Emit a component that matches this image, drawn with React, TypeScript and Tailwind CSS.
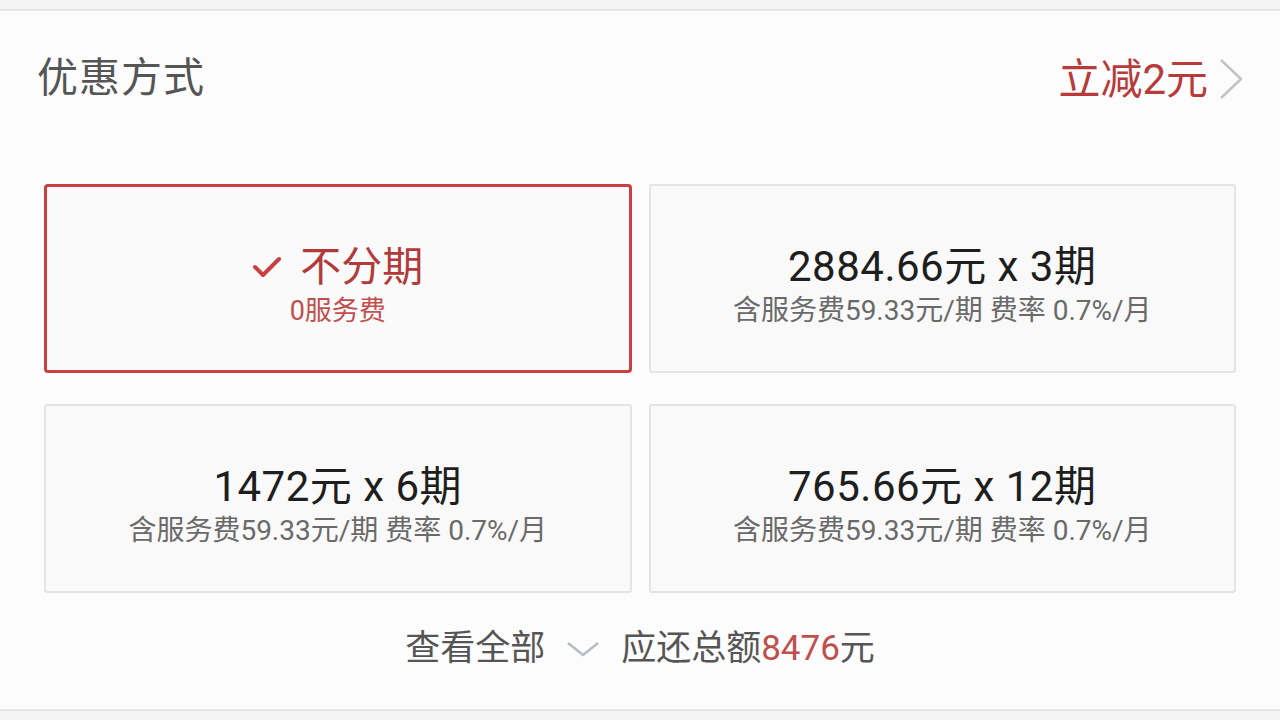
import React from 'react';

const plans = [
  { main: '2884.66元 x 3期', sub: '含服务费59.33元/期 费率 0.7%/月' },
  { main: '1472元 x 6期', sub: '含服务费59.33元/期 费率 0.7%/月' },
  { main: '765.66元 x 12期', sub: '含服务费59.33元/期 费率 0.7%/月' },
];

const Card: React.FC<{ main: string; sub: string }> = ({ main, sub }) => (
  <div className="h-[189px] rounded-[3px] border-2 border-[#e4e4e4] bg-[#f9f9f9] flex flex-col items-center justify-center pt-[14px]">
    <div className="text-[42px] leading-[46px] text-[#1e1e1e] tracking-[0.5px]">{main}</div>
    <div className="text-[28px] leading-[32px] text-[#6a6a6a] mt-[5px]">{sub}</div>
  </div>
);

export default function App() {
  return (
    <div
      className="w-[1280px] h-[720px] bg-[#f4f4f4] pt-[9px] overflow-hidden"
      style={{ fontFamily: 'Roboto, "Noto Sans CJK SC", sans-serif' }}
    >
      <div className="h-[702px] bg-[#fcfcfc] border-t-2 border-b-2 border-[#e6e6e6] flex flex-col">
        <div className="flex items-center justify-between pl-[37px] pr-[36px] h-[140px] pb-[4px]">
          <div className="text-[41px] text-[#555] tracking-[1px]">优惠方式</div>
          <div className="flex items-center gap-[10px]">
            <span className="text-[42px] text-[#b83b3b]">立减2元</span>
            <svg width="26" height="44" viewBox="0 0 26 44" fill="none">
              <path d="M3 3 L23 22 L3 41" stroke="#c4c4c4" strokeWidth="2.5" strokeLinejoin="round" />
            </svg>
          </div>
        </div>
        <div className="grid grid-cols-2 gap-x-[17px] gap-y-[31px] px-[44px] pt-[33px]">
          <div className="h-[189px] rounded-[4px] border-[3px] border-[#c8403f] bg-[#fbfafa] flex flex-col items-center justify-center pt-[14px]">
            <div className="flex items-center gap-[18px]">
              <svg width="30" height="22" viewBox="0 0 30 22" fill="none">
                <path d="M3 11 L11 19 L27 3" stroke="#c8403f" strokeWidth="4" strokeLinecap="round" strokeLinejoin="round" />
              </svg>
              <span className="text-[41px] leading-[46px] text-[#b33a3a]">不分期</span>
            </div>
            <div className="text-[27px] leading-[32px] text-[#c0504d] mt-[5px]">0服务费</div>
          </div>
          {plans.map((p, i) => (
            <Card key={i} main={p.main} sub={p.sub} />
          ))}
        </div>
        <div className="flex items-center justify-center mt-[30px] text-[35px] text-[#555]">
          <span>查看全部</span>
          <svg className="mx-[20px]" width="36" height="20" viewBox="0 0 36 20" fill="none">
            <path d="M3 4 L18 16 L33 4" stroke="#b8bcc8" strokeWidth="2.5" strokeLinejoin="round" />
          </svg>
          <span>
            应还总额<span className="text-[#c0504d]">8476</span>元
          </span>
        </div>
      </div>
    </div>
  );
}
